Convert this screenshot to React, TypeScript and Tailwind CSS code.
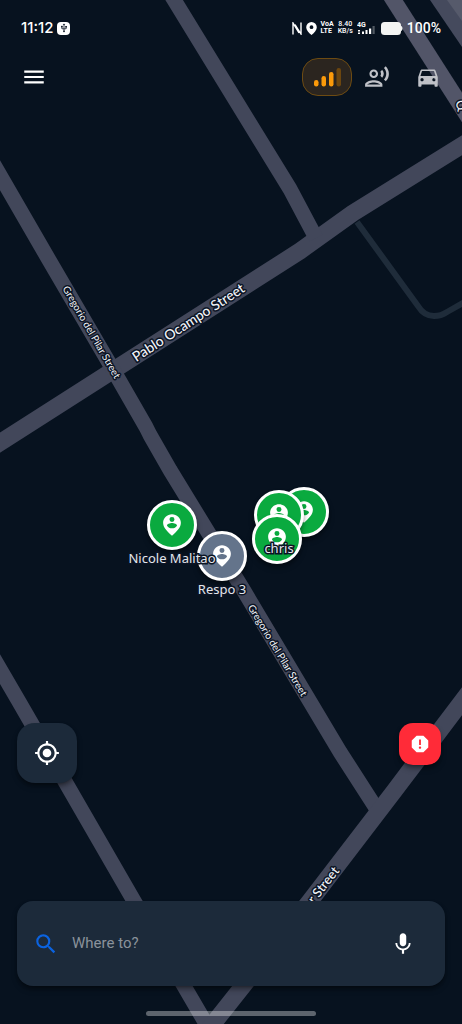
import {
  MdDirectionsCar,
  MdMenu,
  MdMic,
  MdMyLocation,
  MdOutlineRecordVoiceOver,
  MdReport,
  MdSearch,
  MdUsb,
} from "react-icons/md";

interface MapMarker {
  id: string;
  name: string;
  x: number;
  y: number;
  online: boolean;
}

interface StreetLabel {
  text: string;
  x: number;
  y: number;
  angle: number;
  size: number;
  anchor?: "middle" | "end" | "start";
}

const markers: MapMarker[] = [
  { id: "m1", name: "", x: 304, y: 512, online: true },
  { id: "m2", name: "chris", x: 279, y: 515, online: true },
  { id: "m3", name: "Respo 3", x: 222, y: 556, online: false },
  { id: "m4", name: "Nicole Malitao", x: 172, y: 525, online: true },
  { id: "m5", name: "", x: 277, y: 539, online: true },
];

const streets: StreetLabel[] = [
  { text: "Pablo Ocampo Street", x: 188, y: 322, angle: -33, size: 14 },
  { text: "Gregorio del Pilar Street", x: 92, y: 332, angle: 60, size: 10 },
  { text: "Gregorio del Pilar Street", x: 278, y: 650, angle: 59, size: 10 },
  { text: "r Street", x: 336, y: 868, angle: -52, size: 13, anchor: "end" },
  { text: "Q", x: 461, y: 105, angle: 57, size: 12 },
];

function CityMap() {
  return (
    <svg width="462" height="1024" viewBox="0 0 462 1024" className="block" role="img" aria-label="Map">
      <g fill="none" stroke="#42475a" strokeLinejoin="round">
        <path d="M357 222L418 306Q424 316 434 316Q441 316 447 312L470 299" stroke="#1f2c3a" strokeWidth="6" />
        <path d="M-10 449L300 251L353 213L472 139" strokeWidth="17" />
        <path d="M-10 158L49 260L115 373L146 427L150 435L170 470L244 591L340 752L376 808" strokeWidth="15" />
        <path d="M168 -10L290 189L316 238" strokeWidth="15" />
        <path d="M-10 652L18 700L134 901L184 986L212 1034" strokeWidth="15" />
        <path d="M472 688L395 790L310 901L243 986L205 1034" strokeWidth="17" />
        <path d="M387 -10L472 123" stroke="#525568" strokeWidth="16" />
      </g>
      <path d="M430 0H462V47Z" fill="#454a5d" />
      <path d="M447 0H462V21Z" fill="#565a6b" />
      <g fontFamily="Lato, 'Open Sans', sans-serif" fill="#f1f3f7" stroke="#0b1424" strokeWidth="3" strokeLinejoin="round" paintOrder="stroke">
        {streets.map((s, i) => (
          <text
            key={i}
            fontSize={s.size}
            fontWeight={s.size > 10 ? 500 : 400}
            textAnchor={s.anchor || "middle"}
            dominantBaseline="central"
            transform={`translate(${s.x} ${s.y}) rotate(${s.angle})`}
          >
            {s.text}
          </text>
        ))}
      </g>
    </svg>
  );
}

function PersonPin() {
  return (
    <svg viewBox="0 0 24 24" className="size-[26px]" fill="currentColor" fillRule="evenodd" aria-hidden="true">
      <path d="M12 2c4.4 0 8.2 3.3 8.2 8 0 3.9-3 7.500-8.200 12-5.200-4.500-8.200-8.100-8.200-12C3.800 5.300 7.600 2 12 2zm0 2.700a2.300 2.300 0 1 0 0 4.600 2.300 2.300 0 0 0 0-4.600zM12 10.200c-2 0-4.600.9-4.600 2.400.9 1.500 2.600 2.400 4.600 2.400s3.700-.9 4.600-2.400c0-1.500-2.600-2.400-4.600-2.400z" />
    </svg>
  );
}

function StatusBar() {
  return (
    <div className="flex h-14 items-center justify-between px-[21px] text-white">
      <div className="flex items-center gap-1">
        <span className="font-[Inter,sans-serif] text-[15px] font-medium">11:12</span>
        <span className="flex size-[13px] items-center justify-center rounded bg-white text-[#0a1422]">
          <MdUsb className="size-[10px]" />
        </span>
      </div>
      <div className="flex items-center gap-1">
        <svg viewBox="0 0 10 13" className="h-[13px] w-[10px]" fill="none" stroke="currentColor" strokeWidth="1.4" aria-label="NFC">
          <path d="M1 12.500V1l6 10M9 .5V12L3 2.500" />
        </svg>
        <svg viewBox="0 0 11 13" className="h-[13px] w-[11px]" fill="currentColor" fillRule="evenodd" aria-label="Location on">
          <path d="M5.500 0A5.300 5.300 0 0 1 10.800 5.200C10.800 8 8.500 10.500 5.500 13 2.500 10.500.2 8 .2 5.200A5.300 5.300 0 0 1 5.500 0zm0 3.300a1.900 1.900 0 1 0 0 3.800 1.900 1.900 0 0 0 0-3.800z" />
        </svg>
        <span className="flex flex-col text-[7px] leading-[7px] font-bold">
          <span>VoA</span>
          <span>LTE</span>
        </span>
        <span className="flex flex-col items-center text-[7px] leading-[7px] font-medium">
          <span>8.40</span>
          <span>KB/s</span>
        </span>
        <svg viewBox="0 0 20 14" className="h-[14px] w-[20px]" fill="currentColor" aria-hidden="true">
          <text x="0" y="6" fontSize="7" fontWeight="700">4G</text>
          <path d="M1 9h2v1.500H1zM1 11.500h2V13H1zM5 10.500h2V13H5zM8.500 9h2v4h-2zM12 7.500h2.200V13H12z" />
          <path d="M15.500 5h2.200v8h-2.200z" opacity=".3" />
        </svg>
        <svg viewBox="0 0 22 13" className="h-[13px] w-[22px]" fill="#f3f4f2" aria-label="Battery full">
          <rect width="20" height="13" rx="3.500" />
          <path d="M20 4c2 .5 2 4.500 0 5z" />
        </svg>
        <span className="text-sm font-medium">100%</span>
      </div>
    </div>
  );
}

export default function App() {
  return (
    <main className="relative isolate flex min-h-screen flex-col overflow-hidden bg-[#07121f] font-[Roboto,sans-serif]">
      {/* map canvas */}
      <div className="absolute inset-0 -z-10">
        <CityMap />
        {markers.map((m) => (
          <button
            key={m.id}
            aria-label={m.name || "Responder"}
            style={{ left: m.x, top: m.y }}
            className={`absolute flex size-[50px] -translate-x-1/2 -translate-y-1/2 items-center justify-center rounded-full border-3 border-white text-white shadow-md shadow-black/40 ${m.online ? "bg-[#0aaa3f]" : "bg-[#64748b]"}`}
          >
            <PersonPin />
          </button>
        ))}
        {markers.filter((m) => m.name).map((m) => (
          <span
            key={m.id}
            style={{ left: m.x, top: m.y + 33 }}
            className="pointer-events-none absolute -translate-x-1/2 -translate-y-1/2 font-['Noto_Sans',sans-serif] text-[13px] leading-4 whitespace-nowrap text-[#e3e6ec] [-webkit-text-stroke:3px_#0b1424] [paint-order:stroke_fill]"
          >
            {m.name}
          </span>
        ))}
      </div>

      <StatusBar />

      <header className="flex h-[42px] items-center justify-between px-[21px]">
        <button aria-label="Menu" className="text-white">
          <MdMenu className="size-[26px]" />
        </button>
        <div className="flex items-center text-[#bfc1c7]">
          <button aria-label="Signal strength" className="flex h-[38px] w-[50px] items-center justify-center rounded-2xl border border-[#6d4b12] bg-[#2b251f]">
            <svg viewBox="0 0 27 20" className="h-5 w-[27px]" fill="#fb9a0a">
              <rect x="0" y="13" width="4.500" height="6.500" rx="2.200" />
              <rect x="7.500" y="9" width="4.500" height="10.500" rx="2.200" />
              <rect x="15" y="5" width="4.500" height="14.500" rx="2.200" />
              <rect x="22.500" y="1" width="4.500" height="18.500" rx="2.200" fill="#6c460f" />
            </svg>
          </button>
          <button aria-label="Voice guidance" className="ml-3">
            <MdOutlineRecordVoiceOver className="size-[26px]" />
          </button>
          <button aria-label="Vehicle" className="ml-[25px]">
            <MdDirectionsCar className="size-[26px]" />
          </button>
        </div>
      </header>

      <div className="mt-auto mb-[118px] flex items-start justify-between pl-[17px] pr-[21px]">
        <button aria-label="My location" className="flex size-[60px] items-center justify-center rounded-[18px] bg-[#1c2a3a] text-white shadow-md shadow-black/40">
          <MdMyLocation className="size-[26px]" />
        </button>
        <button aria-label="Report" className="flex size-[42px] items-center justify-center rounded-[14px] bg-[#ff2b38] text-white shadow-md shadow-black/40">
          <MdReport className="size-[22px]" />
        </button>
      </div>

      <form className="mx-[17px] flex h-[85px] items-center rounded-2xl bg-[#1c2a3a] pl-4 pr-[29px] shadow-md shadow-black/40">
        <label htmlFor="destination" aria-label="Where to?" className="text-[#0b63e0]">
          <MdSearch className="size-[26px]" />
        </label>
        <input
          id="destination"
          type="text"
          placeholder="Where to?"
          className="ml-[13px] min-w-0 flex-1 bg-transparent text-[15px] text-white outline-none placeholder:text-[#8a929b]"
        />
        <button type="button" aria-label="Voice search" className="text-white">
          <MdMic className="size-[26px]" />
        </button>
      </form>

      <div className="flex h-[38px] items-end justify-center pb-2">
        <div className="h-[5px] w-[170px] rounded-full bg-white/35" />
      </div>
    </main>
  );
}
